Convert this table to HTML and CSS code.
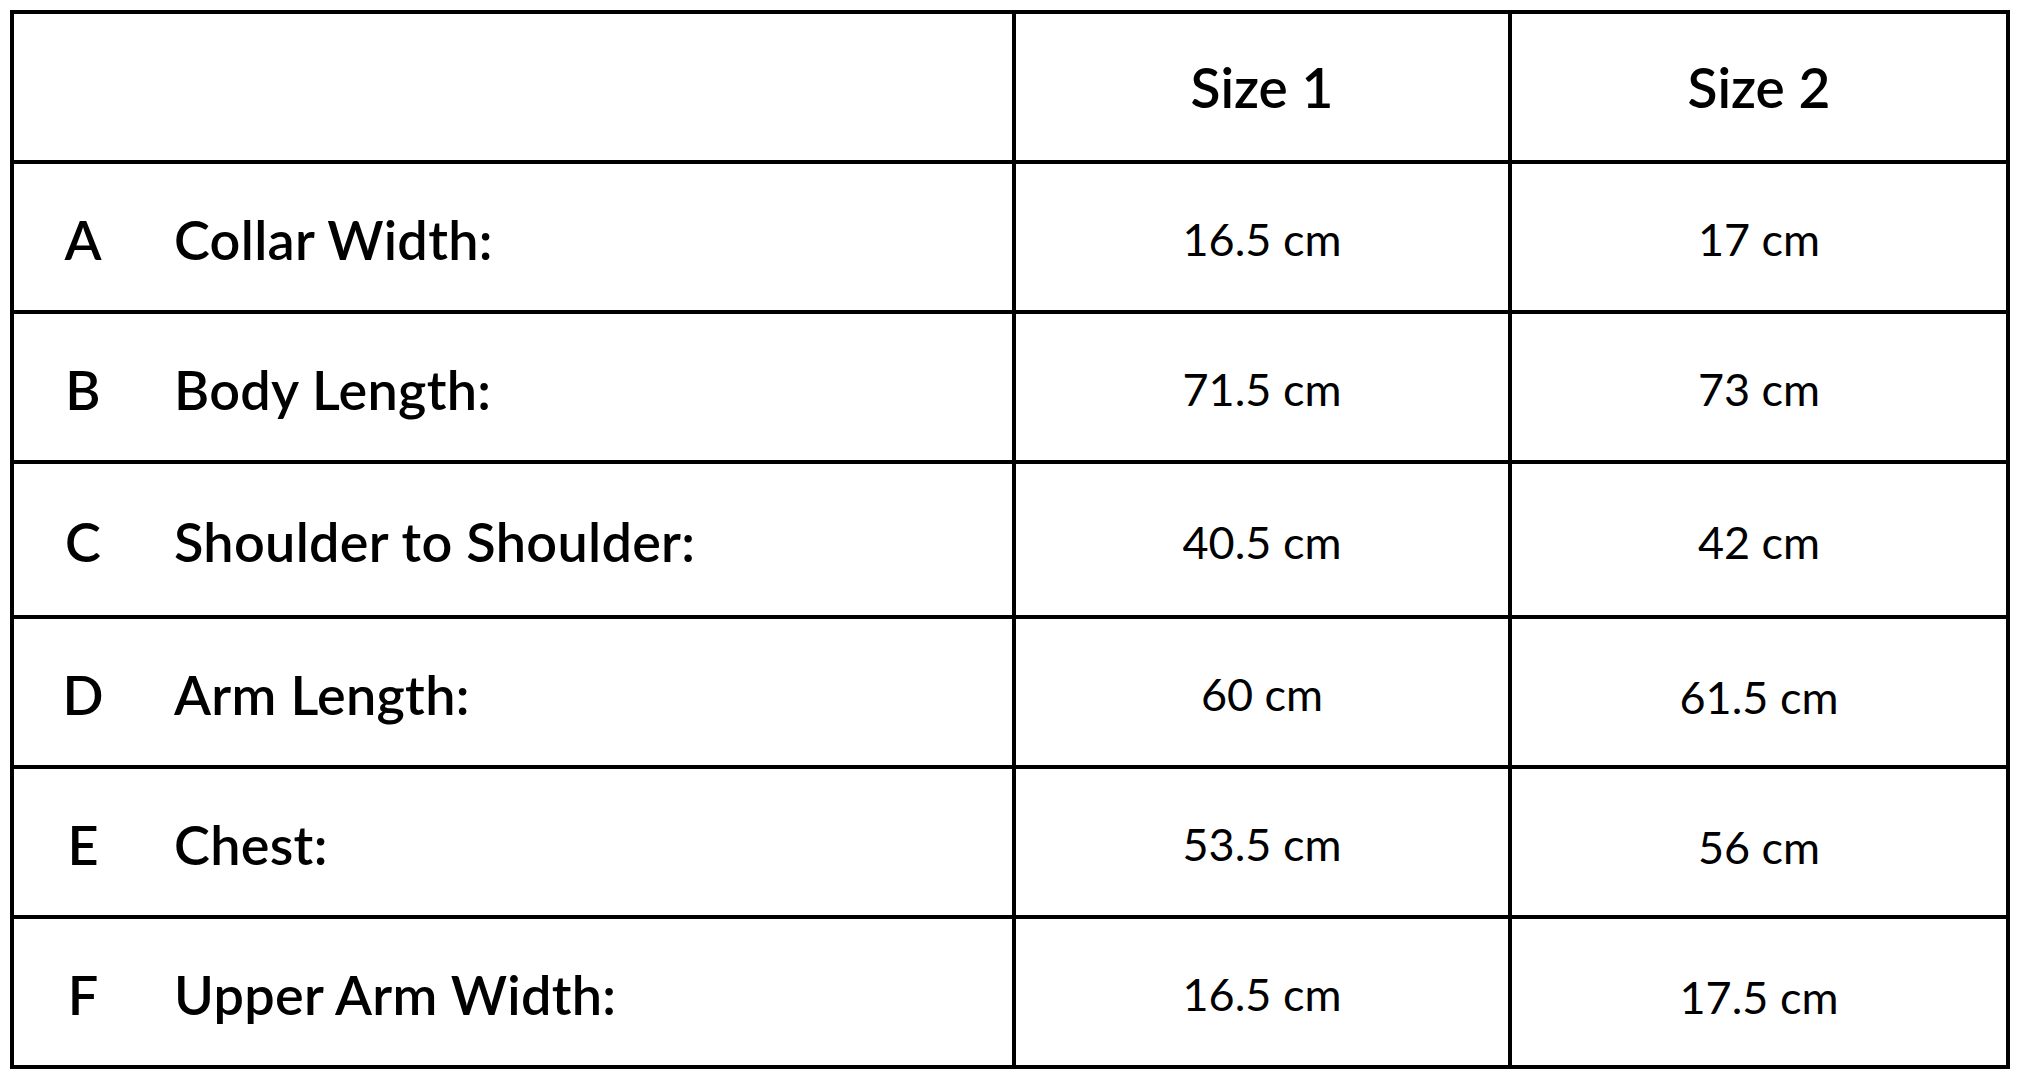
FILE: index.html
```html
<!DOCTYPE html>
<html lang="en">
<head>
<meta charset="utf-8">
<title>Size chart</title>
<link rel="stylesheet" href="styles.css">
</head>
<body>
<div class="chart">
  <div class="cell head"></div>
  <div class="cell head size">Size 1</div>
  <div class="cell head size">Size 2</div>

  <div class="cell label"><span class="letter">A</span><span class="name">Collar Width:</span></div>
  <div class="cell value">16.5 cm</div>
  <div class="cell value">17 cm</div>

  <div class="cell label"><span class="letter">B</span><span class="name">Body Length:</span></div>
  <div class="cell value">71.5 cm</div>
  <div class="cell value">73 cm</div>

  <div class="cell label"><span class="letter">C</span><span class="name">Shoulder to Shoulder:</span></div>
  <div class="cell value">40.5 cm</div>
  <div class="cell value">42 cm</div>

  <div class="cell label"><span class="letter">D</span><span class="name">Arm Length:</span></div>
  <div class="cell value">60 cm</div>
  <div class="cell value low">61.5 cm</div>

  <div class="cell label"><span class="letter">E</span><span class="name">Chest:</span></div>
  <div class="cell value">53.5 cm</div>
  <div class="cell value low">56 cm</div>

  <div class="cell label"><span class="letter">F</span><span class="name">Upper Arm Width:</span></div>
  <div class="cell value">16.5 cm</div>
  <div class="cell value low">17.5 cm</div>
</div>
</body>
</html>
```
FILE: styles.css
```css
html, body {
  margin: 0;
  padding: 0;
  background: #ffffff;
}

body {
  font-family: Lato, "Open Sans", "Liberation Sans", sans-serif;
  color: #000000;
}

.chart {
  margin: 10px;
  width: max-content;
  display: grid;
  grid-template-columns: 998px 492px 494px;
  grid-template-rows: 146px 146px 146px 151px 146px 146px 146px;
  gap: 4px;
  padding: 4px;
  background: #000000;
}

.cell {
  background: #ffffff;
  display: flex;
  align-items: center;
}

.size {
  justify-content: center;
  font-size: 55px;
  font-weight: 600;
  padding-top: 0;
}

.label {
  padding-left: 40px;
  font-size: 54px;
  font-weight: 600;
  padding-top: 4px;
}

.letter {
  width: 58px;
  text-align: center;
}

.name {
  margin-left: 62px;
  letter-spacing: 0.3px;
}

.value {
  justify-content: center;
  font-size: 45px;
  font-weight: 400;
  padding-top: 4px;
}

.value.low {
  padding-top: 10px;
}
```
